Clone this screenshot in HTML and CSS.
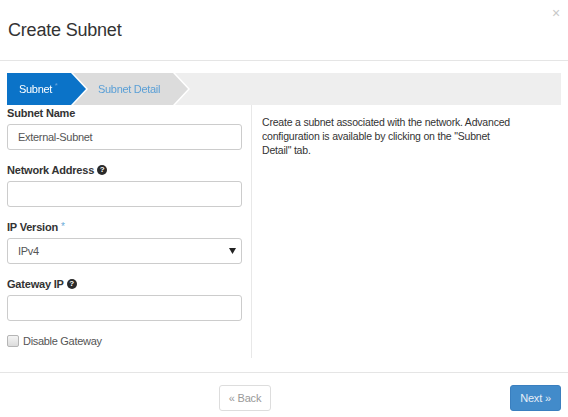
FILE: index.html
```html
<!DOCTYPE html>
<html>
<head>
<meta charset="utf-8">
<link rel="stylesheet" href="styles.css">
</head>
<body>
<div class="modal">
  <div class="header">
    <h1 class="title">Create Subnet</h1>
    <span class="close">×</span>
  </div>
  <div class="body">
    <div class="tabs">
      <div class="tab-wrap tab-wrap-active">
        <div class="tab tab-active">Subnet <span class="tab-req">*</span></div>
      </div>
      <div class="tab-wrap tab-wrap-next">
        <div class="tab tab-next">Subnet Detail</div>
      </div>
    </div>
    <div class="content">
      <div class="form-col">
        <div class="group">
          <div class="label">Subnet Name</div>
          <div class="input">External-Subnet</div>
        </div>
        <div class="group">
          <div class="label">Network Address <span class="help">?</span></div>
          <div class="input"></div>
        </div>
        <div class="group">
          <div class="label">IP Version <span class="req">*</span></div>
          <div class="input select"><span>IPv4</span>
            <svg class="caret" width="7" height="6" viewBox="0 0 7 6"><path d="M0 0H7L3.5 6Z" fill="#222"/></svg>
          </div>
        </div>
        <div class="group">
          <div class="label">Gateway IP <span class="help">?</span></div>
          <div class="input"></div>
        </div>
        <div class="check-row">
          <span class="checkbox"></span>
          <span class="check-label">Disable Gateway</span>
        </div>
      </div>
      <div class="help-col">
        <p class="help-text">Create a subnet associated with the network. Advanced configuration is available by clicking on the "Subnet Detail" tab.</p>
      </div>
    </div>
  </div>
  <div class="footer">
    <div class="footer-left"><button class="btn btn-back">« Back</button></div>
    <div class="footer-right"><button class="btn btn-next">Next »</button></div>
  </div>
</div>
</body>
</html>
```
FILE: styles.css
```css
* { box-sizing: border-box; }
html, body { margin: 0; padding: 0; background: #fff; }
body {
  font-family: "Liberation Sans", Arial, Helvetica, sans-serif;
  font-size: 11px;
  letter-spacing: -0.3px;
  color: #333;
  width: 568px;
  height: 417px;
  overflow: hidden;
}
.modal { width: 568px; }
.header {
  height: 61px;
  border-bottom: 1px solid #e5e5e5;
  display: flex;
  align-items: flex-start;
  justify-content: space-between;
  padding: 0 8px 0 8px;
}
.title {
  margin: 19px 0 0 0;
  font-size: 18px;
  font-weight: normal;
  line-height: 22px;
  letter-spacing: -0.2px;
  color: #333;
}
.close {
  margin-top: 4px;
  font-size: 14px;
  color: #c8c8c8;
  line-height: 18px;
}
.body { padding: 12px 7px 0 7px; }
.tabs {
  height: 32px;
  width: 554px;
  background: #eee;
  display: flex;
}
.tab-wrap { height: 32px; }
.tab-wrap-active {
  position: relative;
  z-index: 2;
  margin-right: -14px;
  filter: drop-shadow(2px 0 0 #fff);
}
.tab-wrap-next {
  z-index: 1;
  filter: drop-shadow(2px 0 0 #fff);
}
.tab {
  height: 32px;
  line-height: 32px;
  font-size: 11px;
  letter-spacing: -0.3px;
  white-space: nowrap;
}
.tab-active {
  width: 79px;
  background: #0b73c8;
  color: #fff;
  padding-left: 12px;
  clip-path: polygon(0 0, 64px 0, 79px 16px, 64px 32px, 0 32px);
}
.tab-req { color: #6aa5dc; font-size: 8px; vertical-align: top; line-height: 26px; }
.tab-next {
  width: 116px;
  background: #dcdcdc;
  color: #5a9fd6;
  padding-left: 26px;
  clip-path: polygon(0 0, 101px 0, 116px 16px, 101px 32px, 0 32px);
}
.content { display: flex; }
.form-col {
  width: 245px;
  padding: 0 9px 9px 0;
  border-right: 1px solid #e8e8e8;
}
.group { margin-bottom: 12px; }
.label {
  font-weight: bold;
  line-height: 16px;
  margin-bottom: 3px;
  display: flex;
  align-items: center;
  gap: 3px;
  color: #333;
  letter-spacing: -0.2px;
}
.help {
  display: inline-flex;
  width: 10px;
  height: 10px;
  border-radius: 50%;
  background: #2a2a2a;
  color: #fff;
  font-size: 8px;
  font-weight: bold;
  align-items: center;
  justify-content: center;
  line-height: 10px;
  letter-spacing: 0;
}
.req { color: #6aaad8; font-weight: normal; font-size: 10px; }
.input {
  height: 26px;
  border: 1px solid #ccc;
  border-radius: 3px;
  padding: 0 10px;
  line-height: 24px;
  color: #555;
  background: #fff;
}
.select {
  display: flex;
  justify-content: space-between;
  align-items: center;
  padding-right: 5px;
}
.check-row {
  display: flex;
  align-items: center;
  gap: 4px;
  height: 16px;
}
.checkbox {
  width: 12px;
  height: 12px;
  border: 1px solid #b5b5b5;
  border-radius: 2px;
  background: linear-gradient(#f4f4f4, #dcdcdc);
}
.check-label { color: #555; }
.help-col {
  flex: 1;
  padding: 10px 10px 0 10px;
}
.help-text {
  margin: 0;
  width: 256px;
  font-size: 10.5px;
  letter-spacing: -0.2px;
  line-height: 14px;
  color: #333;
}
.footer {
  margin-top: 14px;
  border-top: 1px solid #e5e5e5;
  display: grid;
  grid-template-columns: 1fr 1fr;
  padding: 12px 7px 0 7px;
}
.footer-left { display: flex; justify-content: flex-end; padding-right: 13px; }
.footer-right { display: flex; justify-content: flex-end; }
.btn {
  height: 26px;
  border-radius: 3px;
  font-family: inherit;
  font-size: 11px;
  letter-spacing: -0.2px;
  padding: 0;
  white-space: nowrap;
  cursor: pointer;
}
.btn-back {
  width: 52px;
  background: #fff;
  border: 1px solid #ddd;
  color: #999;
}
.btn-next {
  width: 51px;
  background: #428bca;
  border: 1px solid #3a7fbf;
  color: #e6eef7;
}
```
